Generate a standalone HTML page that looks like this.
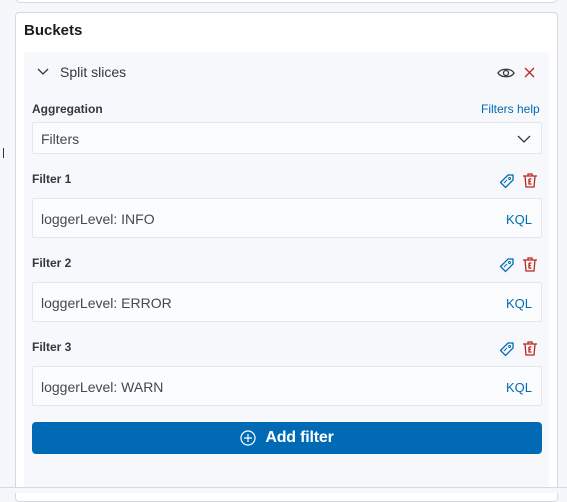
<!DOCTYPE html>
<html><head><style>
*{box-sizing:border-box;margin:0;padding:0}
body{width:567px;height:493px;background:#f5f7fa;font-family:"Liberation Sans",sans-serif;position:relative;overflow:hidden;color:#343741}
.abs{position:absolute}
.top{left:16px;top:-10px;width:541px;height:13px;background:#fff;border:1px solid #d3dae6;border-radius:4px}
.card{left:15px;top:12px;width:543px;height:490px;background:#fff;border:1px solid #d3dae6;border-radius:4px}
.panel{left:24px;top:52px;width:525px;height:440px;background:#f7f8fc;border-radius:4px}
.lbl{font-size:12px;font-weight:bold;color:#343741}
.box{left:32px;width:510px;background:#fbfcfd;border:1px solid #e3e7ef;border-radius:2px;font-size:14px;color:#45484f;padding-left:8px;padding-top:2px;display:flex;align-items:center}
.kql{position:absolute;right:9px;color:#006bb4;font-size:13px}
.btn{left:32px;top:422px;width:510px;height:32px;background:#006bb4;border-radius:4px;color:#fff;font-size:16px;display:flex;align-items:center;justify-content:center;gap:9px}
</style></head><body>
<div class="abs top"></div>
<div class="abs card"></div>
<div class="abs panel"></div>
<div class="abs" style="left:3px;top:148px;width:1px;height:10px;background:#333"></div>
<div class="abs" style="left:0;top:487px;width:567px;height:1px;background:#d3dae6"></div>
<div class="abs" style="left:0;top:488px;width:567px;height:5px;background:#f5f7fa"></div>
<div class="abs" style="left:24px;top:22px;font-size:15px;font-weight:bold;color:#1a1c21">Buckets</div>
<svg class="abs" style="left:37px;top:68px" width="12" height="8" viewBox="0 0 12 8"><path d="M1 1l5 5 5-5" fill="none" stroke="#343741" stroke-width="1.3"/></svg>
<div class="abs" style="left:60px;top:64px;font-size:14px">Split slices</div>
<svg class="abs" style="left:497px;top:66px" width="18" height="14" viewBox="0 0 18 14"><path d="M1 7C4 2 14 2 17 7 14 12 4 12 1 7Z" fill="none" stroke="#343741" stroke-width="1.3"/><circle cx="9" cy="7" r="2.5" fill="none" stroke="#343741" stroke-width="1.3"/></svg>
<svg class="abs" style="left:524px;top:67px" width="11" height="11"><path d="M1 1l9 9M10 1l-9 9" stroke="#bd271e" stroke-width="1.3"/></svg>
<div class="abs lbl" style="left:32px;top:102px">Aggregation</div>
<div class="abs" style="left:481px;top:102px;font-size:12px;color:#006bb4">Filters help</div>
<div class="abs box" style="top:122px;height:32px">Filters<svg style="position:absolute;right:10px" width="14" height="8" viewBox="0 0 14 8"><path d="M1 1l6 6 6-6" fill="none" stroke="#343741" stroke-width="1.3"/></svg></div>

<div class="abs lbl" style="left:32px;top:172px">Filter 1</div>
<div class="abs lbl" style="left:32px;top:256px">Filter 2</div>
<div class="abs lbl" style="left:32px;top:340px">Filter 3</div>

<div class="abs box" style="top:198px;height:40px">loggerLevel: INFO<span class="kql">KQL</span></div>
<div class="abs box" style="top:282px;height:40px">loggerLevel: ERROR<span class="kql">KQL</span></div>
<div class="abs box" style="top:366px;height:40px">loggerLevel: WARN<span class="kql">KQL</span></div>

<svg width="0" height="0" style="position:absolute"><defs>
<g id="tag"><path d="M9 1h5v5l-7.5 7.5-5-5z" fill="none" stroke="#006bb4" stroke-width="1.3"/><circle cx="10.5" cy="4.5" r="1" fill="none" stroke="#006bb4"/><path d="M5 9l3-3" stroke="#006bb4"/></g>
<g id="trash"><path d="M1 3h14M6 3V1h4v2M3 3l1 11h8l1-11M7 6h2.5M7 6v5h2.5M7 8.5h2" fill="none" stroke="#bd271e" stroke-width="1.3"/></g>
</defs></svg>
<svg class="abs" style="left:499px;top:174px" width="16" height="16"><use href="#tag"/></svg>
<svg class="abs" style="left:522px;top:173px" width="16" height="16"><use href="#trash"/></svg>
<svg class="abs" style="left:499px;top:258px" width="16" height="16"><use href="#tag"/></svg>
<svg class="abs" style="left:522px;top:257px" width="16" height="16"><use href="#trash"/></svg>
<svg class="abs" style="left:499px;top:342px" width="16" height="16"><use href="#tag"/></svg>
<svg class="abs" style="left:522px;top:341px" width="16" height="16"><use href="#trash"/></svg>

<div class="abs btn"><svg width="16" height="16" viewBox="0 0 16 16"><circle cx="8" cy="8" r="7" fill="none" stroke="#fff" stroke-width="1.2"/><path d="M8 4v8M4 8h8" stroke="#fff" stroke-width="1.2"/></svg><span style="font-size:16px;font-weight:bold;letter-spacing:-0.2px">Add filter</span></div>
</body></html>
